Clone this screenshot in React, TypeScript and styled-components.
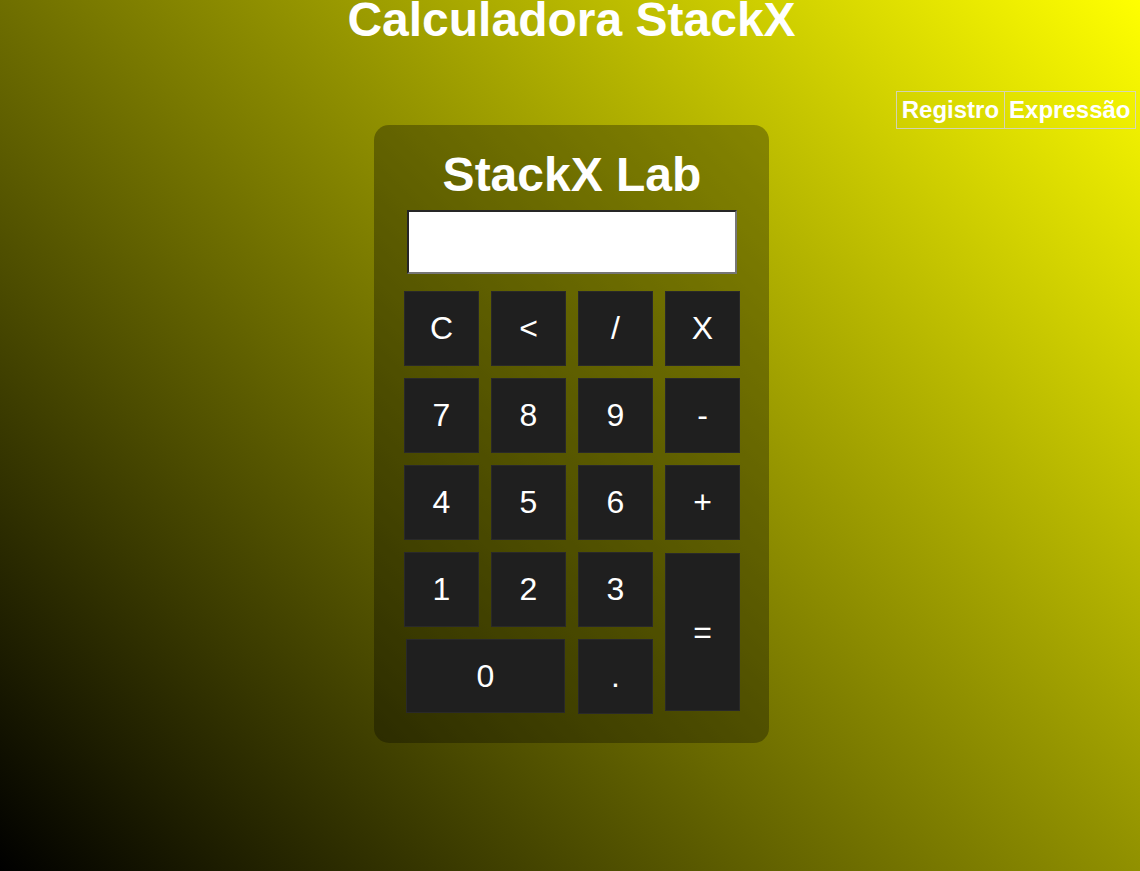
import React from "react";
import styled, { createGlobalStyle } from "styled-components";

const GlobalStyle = createGlobalStyle`
  html, body {
    margin: 0;
    padding: 0;
  }
  body {
    font-family: "Liberation Sans", Arial, sans-serif;
  }
`;

const Page = styled.div`
  min-height: 100vh;
  box-sizing: border-box;
  padding-left: 3px;
  background: linear-gradient(45deg, #000000, #ffff00);
  display: flex;
  flex-direction: column;
  overflow: hidden;
`;

const Header = styled.h1`
  margin: -4px 0 0;
  font-size: 48px;
  line-height: 48px;
  font-weight: 700;
  color: #ffffff;
  text-align: center;
`;

const Tabs = styled.nav`
  display: flex;
  justify-content: flex-end;
  margin-top: 47px;
  padding-right: 4px;
`;

const Tab = styled.button<{ $first?: boolean }>`
  font-family: "Liberation Sans", Arial, sans-serif;
  font-size: 24px;
  font-weight: 700;
  line-height: 28px;
  color: #ffffff;
  background: transparent;
  border: 1px solid rgba(210, 210, 210, 0.85);
  border-right: ${(p) => (p.$first ? "none" : "1px solid rgba(210, 210, 210, 0.85)")};
  padding: 4px 4.5px;
  cursor: pointer;
`;

const Panel = styled.div`
  align-self: center;
  margin-top: -4px;
  box-sizing: border-box;
  width: 395px;
  padding: 26px 29px 29px 30px;
  border-radius: 15px;
  background: rgba(0, 0, 0, 0.3);
  display: flex;
  flex-direction: column;
`;

const Title = styled.h2`
  margin: 0 0 11px;
  font-size: 48px;
  line-height: 48px;
  font-weight: 700;
  color: #ffffff;
  text-align: center;
`;

const Display = styled.input`
  align-self: center;
  box-sizing: border-box;
  width: 330px;
  height: 64px;
  margin: 0 0 17px;
  border-style: solid;
  border-width: 2px;
  border-color: #262626 #767676 #767676 #262626;
  background: #ffffff;
  font-family: "Liberation Sans", Arial, sans-serif;
  font-size: 32px;
  padding: 0 8px;
  outline: none;
`;

const Keys = styled.div`
  display: grid;
  grid-template-columns: repeat(4, 75px);
  grid-auto-rows: 75px;
  gap: 12px;
`;

const Key = styled.button<{ $wide?: boolean; $tall?: boolean }>`
  box-sizing: border-box;
  background: #1f1f1f;
  border: 1px solid #292929;
  color: #ffffff;
  font-family: "Liberation Sans", Arial, sans-serif;
  font-size: 32px;
  padding: 0;
  cursor: pointer;
  display: flex;
  align-items: center;
  justify-content: center;
  grid-column: ${(p) => (p.$wide ? "span 2" : "auto")};
  grid-row: ${(p) => (p.$tall ? "span 2" : "auto")};
  margin: ${(p) => (p.$wide ? "0 1px 1px 2px" : p.$tall ? "1px 0 3px 0" : "0")};
`;

const keys: { label: string; wide?: boolean; tall?: boolean }[] = [
  { label: "C" },
  { label: "<" },
  { label: "/" },
  { label: "X" },
  { label: "7" },
  { label: "8" },
  { label: "9" },
  { label: "-" },
  { label: "4" },
  { label: "5" },
  { label: "6" },
  { label: "+" },
  { label: "1" },
  { label: "2" },
  { label: "3" },
  { label: "=", tall: true },
  { label: "0", wide: true },
  { label: "." },
];

export default function App() {
  return (
    <>
      <GlobalStyle />
      <Page>
        <Header>Calculadora StackX</Header>
        <Tabs>
          <Tab $first>Registro</Tab>
          <Tab>Expressão</Tab>
        </Tabs>
        <Panel>
          <Title>StackX Lab</Title>
          <Display type="text" readOnly />
          <Keys>
            {keys.map((k) => (
              <Key key={k.label} $wide={k.wide} $tall={k.tall}>
                {k.label}
              </Key>
            ))}
          </Keys>
        </Panel>
      </Page>
    </>
  );
}
